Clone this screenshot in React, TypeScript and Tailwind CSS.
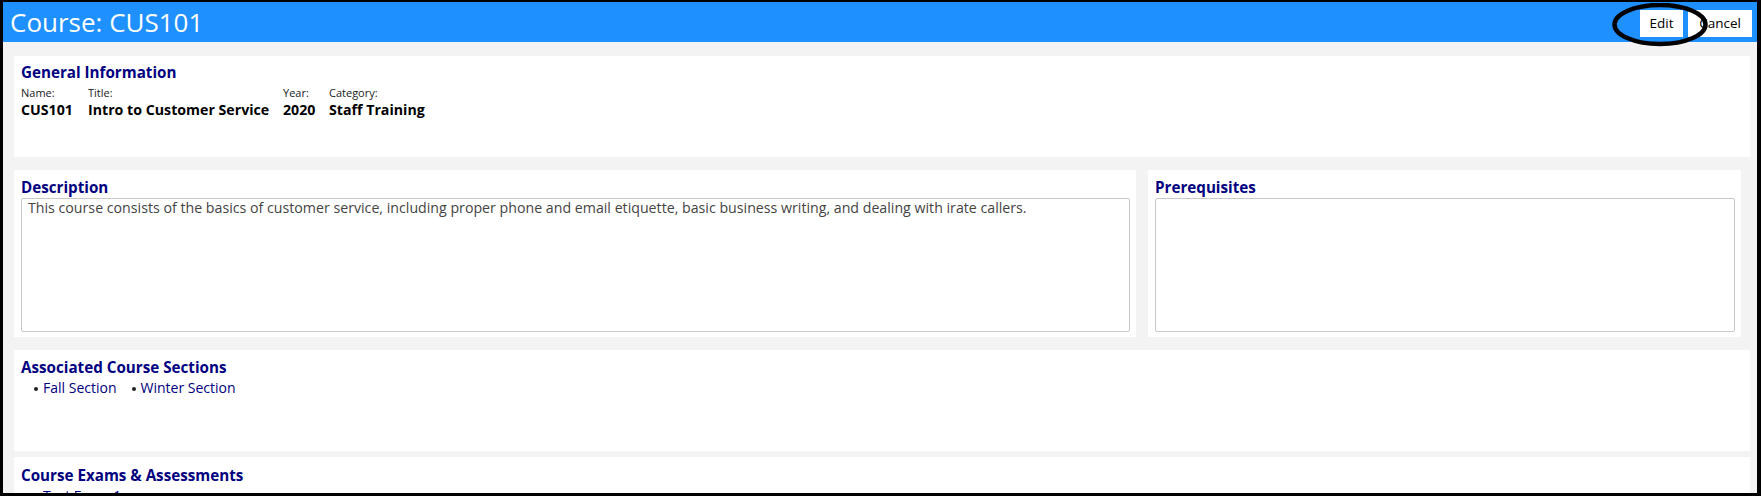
import React from "react";

const navy = "text-[#000080]";

function Card({
  title,
  className = "",
  children,
}: {
  title: string;
  className?: string;
  children?: React.ReactNode;
}) {
  return (
    <section className={`bg-white px-[7px] ${className}`}>
      <h2 className={`text-[15.2px] font-bold leading-[21px] ${navy}`}>{title}</h2>
      {children}
    </section>
  );
}

function Field({ label, value, width }: { label: string; value: string; width: string }) {
  return (
    <div className={`${width} shrink-0`}>
      <div className="text-[11px] leading-[15px] text-[#222]">{label}</div>
      <div className="text-[14.2px] font-bold leading-[20px] text-black whitespace-nowrap">{value}</div>
    </div>
  );
}

function LinkList({ items }: { items: string[] }) {
  return (
    <ul className="flex gap-[15px] pl-[13px]">
      {items.map((item) => (
        <li key={item} className="flex items-center gap-[5px] text-[14px] leading-[20px]">
          <span className="mt-[2px] h-[4px] w-[4px] rounded-full bg-[#222]" />
          <a className={`${navy} cursor-pointer`}>{item}</a>
        </li>
      ))}
    </ul>
  );
}

export default function App() {
  return (
    <div className="h-[496px] w-full overflow-hidden border-t-2 border-l-[3px] border-r-4 border-b-[3px] border-black bg-[#f3f3f3] font-['Open_Sans',sans-serif]">
      <header className="relative z-10 flex h-[40px] items-center justify-between bg-[#1e90ff] pl-[7px] pr-[5px]">
        <h1 className="text-[26px] leading-[34px] text-white">Course: CUS101</h1>
        <div className="flex gap-[5px] pt-[3px]">
          <button className="h-[27px] w-[43px] bg-white text-[13.5px] text-black">Edit</button>
          <button className="h-[27px] w-[64px] bg-white text-[13.5px] text-black">Cancel</button>
        </div>
        {/* hand-drawn ring around the Edit button */}
        <svg
          className="pointer-events-none absolute right-[49px] top-[1px]"
          width="96"
          height="44"
          viewBox="0 0 96 44"
        >
          <ellipse cx="48" cy="21.5" rx="45.5" ry="19.5" fill="none" stroke="#000" strokeWidth="4.5" />
        </svg>
      </header>

      <main className="flex flex-col pl-[11px] pr-[7px] pt-[14px]">
        <Card title="General Information" className="h-[101px] pt-[6px]">
          <div className="mt-[2px] flex">
            <Field label="Name:" value="CUS101" width="w-[67px]" />
            <Field label="Title:" value="Intro to Customer Service" width="w-[195px]" />
            <Field label="Year:" value="2020" width="w-[46px]" />
            <Field label="Category:" value="Staff Training" width="w-auto" />
          </div>
        </Card>

        <div className="mt-[13px] flex gap-[12px] pr-[9px]">
          <Card title="Description" className="h-[167px] flex-1 pr-[6px] pt-[7px]">
            <div className="h-[134px] rounded-[2px] border border-[#c9c9c9] px-[6px] text-[14.2px] leading-[18px] text-[#444]">
              This course consists of the basics of customer service, including proper phone and email etiquette, basic business writing, and dealing with irate callers.
            </div>
          </Card>
          <Card title="Prerequisites" className="h-[167px] w-[593px] pr-[6px] pt-[7px]">
            <div className="h-[134px] rounded-[2px] border border-[#c9c9c9]" />
          </Card>
        </div>

        <Card title="Associated Course Sections" className="mt-[13px] h-[101px] pt-[7px]">
          <LinkList items={["Fall Section", "Winter Section"]} />
        </Card>

        <Card title="Course Exams & Assessments" className="mt-[6px] h-[101px] pt-[8px]">
          <LinkList items={["Test Exam 1"]} />
        </Card>
      </main>
    </div>
  );
}
